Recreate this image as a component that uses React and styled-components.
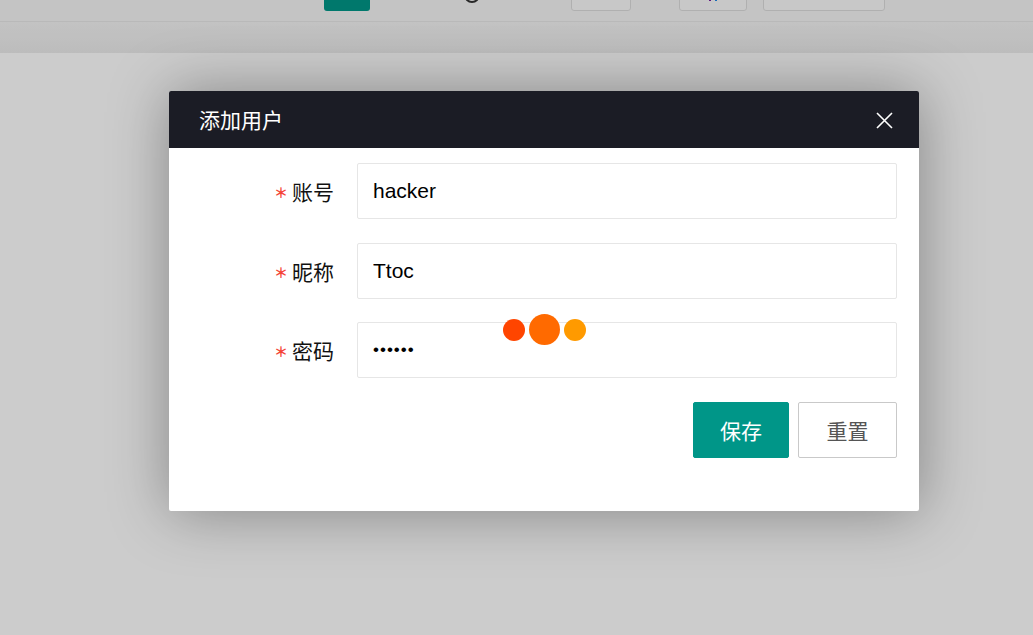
import React from "react";
import styled, { createGlobalStyle } from "styled-components";

const GlobalStyle = createGlobalStyle`
  html, body {
    margin: 0;
    padding: 0;
    background: #ffffff;
    font-family: "Liberation Sans", "Noto Sans CJK SC", sans-serif;
  }
  * {
    box-sizing: border-box;
  }
`;

const Page = styled.div`
  width: 1033px;
  height: 635px;
  overflow: hidden;
  position: relative;
  background: #ffffff;
`;

const TopBar = styled.div`
  height: 22px;
  background: #f5f5f5;
  border-bottom: 1px solid #e8e8e8;
  display: flex;
  align-items: flex-start;
  padding-left: 324px;
  overflow: hidden;
`;

const TopButton = styled.div`
  width: 46px;
  height: 30px;
  margin-top: -19px;
  background: #009688;
  border-radius: 3px;
`;

const TopIcon = styled.div`
  width: 16px;
  height: 16px;
  margin-top: -13px;
  margin-left: 94px;
  border: 2px solid #333;
  border-radius: 50%;
`;

const TopBox = styled.div`
  width: ${(p) => p.$w}px;
  height: 30px;
  margin-top: -19px;
  margin-left: ${(p) => p.$ml}px;
  border: 1px solid #dddddd;
  border-radius: 3px;
  background: #fafafa;
  display: flex;
  justify-content: center;
  align-items: flex-end;
  padding-bottom: 9px;
`;

const Tick = styled.span`
  display: block;
  width: 2px;
  height: 3px;
  margin: 0 2px;
  background: ${(p) => p.$c};
`;

const Band = styled.div`
  height: 31px;
  background: linear-gradient(180deg, #f4f4f4 0%, #ececec 100%);
`;

const Shade = styled.div`
  position: absolute;
  inset: 0;
  background: rgba(0, 0, 0, 0.2);
`;

const Dialog = styled.div`
  position: absolute;
  left: 169px;
  top: 91px;
  width: 750px;
  height: 420px;
  background: #ffffff;
  box-shadow: 1px 1px 60px rgba(0, 0, 0, 0.35);
  border-radius: 2px;
  display: flex;
  flex-direction: column;
`;

const Header = styled.div`
  height: 57px;
  background: #1b1c25;
  border-radius: 2px 2px 0 0;
  display: flex;
  align-items: center;
  justify-content: space-between;
  padding: 0 26px 0 30px;
`;

const Title = styled.div`
  color: #ffffff;
  font-family: "Noto Sans CJK SC", sans-serif;
  font-size: 21px;
  line-height: 1;
`;

const Close = styled.button`
  width: 17px;
  height: 17px;
  padding: 0;
  margin-top: 2px;
  border: 0;
  background: transparent;
  display: flex;
`;

const Form = styled.form`
  padding: 15px 22px 0 0;
  display: flex;
  flex-direction: column;
  gap: 23.5px;
`;

const Row = styled.div`
  display: flex;
  align-items: center;
`;

const Label = styled.label`
  width: 188px;
  padding-right: 23px;
  display: flex;
  justify-content: flex-end;
  align-items: center;
  font-family: "Noto Sans CJK SC", sans-serif;
  font-size: 21px;
  color: #111;
`;

const Star = styled.span`
  color: #f44336;
  font-family: "Noto Sans CJK SC", sans-serif;
  font-size: 14px;
  font-weight: 700;
  margin-right: 4px;
  margin-top: 2px;
`;

const Input = styled.input`
  width: 540px;
  height: 56px;
  border: 1px solid #e6e6e6;
  border-radius: 2px;
  padding: 0 15px;
  font-family: "Liberation Sans", "Noto Sans CJK SC", sans-serif;
  font-size: 21px;
  color: #000;
  background: #fff;
  outline: none;
  &[type="password"] {
    font-size: 17px;
    letter-spacing: 1px;
  }
`;

const Actions = styled.div`
  display: flex;
  justify-content: flex-end;
  gap: 9px;
`;

const Button = styled.button`
  width: ${(p) => (p.$primary ? 96 : 99)}px;
  height: 56px;
  border-radius: 2px;
  border: 1px solid ${(p) => (p.$primary ? "#009688" : "#c9c9c9")};
  background: ${(p) => (p.$primary ? "#009688" : "#ffffff")};
  color: ${(p) => (p.$primary ? "#ffffff" : "#555")};
  font-family: "Noto Sans CJK SC", sans-serif;
  font-size: 21px;
  padding: 0;
`;

const Loader = styled.div`
  position: absolute;
  left: 503px;
  top: 314px;
  display: flex;
  align-items: center;
  gap: 4px;
`;

const Dot = styled.span`
  display: block;
  width: ${(p) => p.$size}px;
  height: ${(p) => p.$size}px;
  border-radius: 50%;
  background: ${(p) => p.$color};
  filter: blur(0.6px);
`;

const App = () => {
  return (
    <Page>
      <GlobalStyle />
      <TopBar>
        <TopButton />
        <TopIcon />
        <TopBox $w={60} $ml={91} />
        <TopBox $w={68} $ml={48}>
          <Tick $c="#7a1fa2" />
          <Tick $c="#1e88e5" />
        </TopBox>
        <TopBox $w={122} $ml={16} />
      </TopBar>
      <Band />
      <Shade />
      <Dialog>
        <Header>
          <Title>添加用户</Title>
          <Close type="button" aria-label="close">
            <svg width="17" height="17" viewBox="0 0 17 17">
              <path
                d="M1 1 L16 16 M16 1 L1 16"
                stroke="#ffffff"
                strokeWidth="1.6"
                fill="none"
              />
            </svg>
          </Close>
        </Header>
        <Form onSubmit={(e) => e.preventDefault()}>
          <Row>
            <Label>
              <Star>＊</Star>账号
            </Label>
            <Input type="text" value="hacker" readOnly />
          </Row>
          <Row>
            <Label>
              <Star>＊</Star>昵称
            </Label>
            <Input type="text" value="Ttoc" readOnly />
          </Row>
          <Row>
            <Label>
              <Star>＊</Star>密码
            </Label>
            <Input type="password" value="123456" readOnly />
          </Row>
          <Actions>
            <Button type="button" $primary>
              保存
            </Button>
            <Button type="button">重置</Button>
          </Actions>
        </Form>
      </Dialog>
      <Loader>
        <Dot $size={22} $color="#ff4500" />
        <Dot $size={31} $color="#ff6a00" />
        <Dot $size={22} $color="#ff9a00" />
      </Loader>
    </Page>
  );
};

export default App;
